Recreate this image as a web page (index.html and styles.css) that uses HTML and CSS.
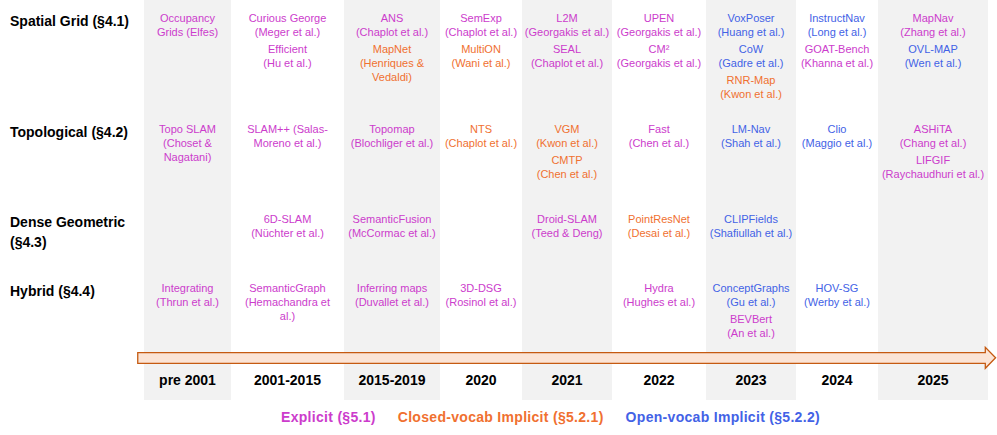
FILE: index.html
```html
<!DOCTYPE html>
<html lang="en">
<head>
<meta charset="utf-8">
<title>Timeline of spatial representations</title>
<link rel="stylesheet" href="styles.css">
</head>
<body>
<div class="chart">
  <div class="col labels">
    <div class="cell"><div class="label">Spatial Grid (§4.1)</div></div>
    <div class="cell"><div class="label">Topological (§4.2)</div></div>
    <div class="cell"><div class="label">Dense Geometric<br>(§4.3)</div></div>
    <div class="cell"><div class="label">Hybrid (§4.4)</div></div>
  </div>

  <div class="col shade w1">
    <div class="cell"><div class="e m">Occupancy<br>Grids (Elfes)</div></div>
    <div class="cell"><div class="e m">Topo SLAM<br>(Choset &amp;<br>Nagatani)</div></div>
    <div class="cell"></div>
    <div class="cell"><div class="e m">Integrating<br>(Thrun et al.)</div></div>
    <div class="year">pre 2001</div>
  </div>

  <div class="col w2">
    <div class="cell"><div class="e m">Curious George<br>(Meger et al.)</div><div class="e m">Efficient<br>(Hu et al.)</div></div>
    <div class="cell"><div class="e m">SLAM++ (Salas-<br>Moreno et al.)</div></div>
    <div class="cell"><div class="e m">6D-SLAM<br>(Nüchter et al.)</div></div>
    <div class="cell"><div class="e m">SemanticGraph<br>(Hemachandra et<br>al.)</div></div>
    <div class="year">2001-2015</div>
  </div>

  <div class="col shade w3">
    <div class="cell"><div class="e m">ANS<br>(Chaplot et al.)</div><div class="e o">MapNet<br>(Henriques &amp;<br>Vedaldi)</div></div>
    <div class="cell"><div class="e m">Topomap<br>(Blochliger et al.)</div></div>
    <div class="cell"><div class="e m">SemanticFusion<br>(McCormac et al.)</div></div>
    <div class="cell"><div class="e m">Inferring maps<br>(Duvallet et al.)</div></div>
    <div class="year">2015-2019</div>
  </div>

  <div class="col w4">
    <div class="cell"><div class="e m">SemExp<br>(Chaplot et al.)</div><div class="e o">MultiON<br>(Wani et al.)</div></div>
    <div class="cell"><div class="e o">NTS<br>(Chaplot et al.)</div></div>
    <div class="cell"></div>
    <div class="cell"><div class="e m">3D-DSG<br>(Rosinol et al.)</div></div>
    <div class="year">2020</div>
  </div>

  <div class="col shade w5">
    <div class="cell"><div class="e m">L2M<br>(Georgakis et al.)</div><div class="e m">SEAL<br>(Chaplot et al.)</div></div>
    <div class="cell"><div class="e o">VGM<br>(Kwon et al.)</div><div class="e o">CMTP<br>(Chen et al.)</div></div>
    <div class="cell"><div class="e m">Droid-SLAM<br>(Teed &amp; Deng)</div></div>
    <div class="cell"></div>
    <div class="year">2021</div>
  </div>

  <div class="col w6">
    <div class="cell"><div class="e m">UPEN<br>(Georgakis et al.)</div><div class="e m">CM²<br>(Georgakis et al.)</div></div>
    <div class="cell"><div class="e m">Fast<br>(Chen et al.)</div></div>
    <div class="cell"><div class="e o">PointResNet<br>(Desai et al.)</div></div>
    <div class="cell"><div class="e m">Hydra<br>(Hughes et al.)</div></div>
    <div class="year">2022</div>
  </div>

  <div class="col shade w7">
    <div class="cell"><div class="e b">VoxPoser<br>(Huang et al.)</div><div class="e b">CoW<br>(Gadre et al.)</div><div class="e o">RNR-Map<br>(Kwon et al.)</div></div>
    <div class="cell"><div class="e b">LM-Nav<br>(Shah et al.)</div></div>
    <div class="cell"><div class="e b">CLIPFields<br>(Shafiullah et al.)</div></div>
    <div class="cell"><div class="e b">ConceptGraphs<br>(Gu et al.)</div><div class="e m">BEVBert<br>(An et al.)</div></div>
    <div class="year">2023</div>
  </div>

  <div class="col w8">
    <div class="cell"><div class="e b">InstructNav<br>(Long et al.)</div><div class="e m">GOAT-Bench<br>(Khanna et al.)</div></div>
    <div class="cell"><div class="e b">Clio<br>(Maggio et al.)</div></div>
    <div class="cell"></div>
    <div class="cell"><div class="e b">HOV-SG<br>(Werby et al.)</div></div>
    <div class="year">2024</div>
  </div>

  <div class="col shade w9">
    <div class="cell"><div class="e m">MapNav<br>(Zhang et al.)</div><div class="e b">OVL-MAP<br>(Wen et al.)</div></div>
    <div class="cell"><div class="e m">ASHiTA<br>(Chang et al.)</div><div class="e m">LIFGIF<br>(Raychaudhuri et al.)</div></div>
    <div class="cell"></div>
    <div class="cell"></div>
    <div class="year">2025</div>
  </div>

  <svg class="arrow" width="861" height="26" viewBox="0 0 861 26" aria-hidden="true">
    <polygon points="0.75,8.7 848.3,8.7 848.3,3.3 858.6,13.8 848.3,24.3 848.3,19.3 0.75,19.3" fill="#fbe4d6" stroke="#c55a11" stroke-width="1.3" stroke-linejoin="miter"/>
  </svg>
</div>

<div class="legend">
  <span class="lg m">Explicit (§5.1)</span>
  <span class="lg o">Closed-vocab Implicit (§5.2.1)</span>
  <span class="lg b">Open-vocab Implicit (§5.2.2)</span>
</div>
</body>
</html>
```

FILE: styles.css
```css
html, body {
  margin: 0;
  padding: 0;
  background: #ffffff;
}

body {
  width: 997px;
  height: 435px;
  overflow: hidden;
  font-family: "Liberation Sans", Arial, sans-serif;
  color: #000;
}

.chart {
  position: relative;
  display: flex;
  height: 400px;
}

.col {
  display: grid;
  grid-template-rows: 111px 90px 69px 64px 23px 32px;
  padding-top: 11px;
  box-sizing: border-box;
  height: 400px;
  text-align: center;
}

.shade {
  background: #f2f2f2;
}

.labels {
  width: 144px;
  padding-left: 10px;
  text-align: left;
}

.w1 { width: 87px; }
.w2 { width: 113px; }
.w3 { width: 96px; }
.w4 { width: 82px; }
.w5 { width: 90px; }
.w6 { width: 94px; }
.w7 { width: 90px; }
.w8 { width: 82px; }
.w9 { width: 110px; }

.cell {
  display: flex;
  flex-direction: column;
  gap: 3px;
  align-items: center;
}

.labels .cell {
  align-items: flex-start;
}

.label {
  font-size: 14px;
  font-weight: bold;
  line-height: 20px;
  white-space: nowrap;
}

.e {
  font-size: 11px;
  line-height: 14px;
  white-space: nowrap;
}

.m { color: #cc3ccc; }
.o { color: #f07030; }
.b { color: #4362e6; }

.year {
  grid-row: 6;
  font-size: 14px;
  font-weight: bold;
  line-height: 16px;
  padding-top: 4px;
}

.arrow {
  position: absolute;
  left: 137px;
  top: 344px;
  display: block;
}

.legend {
  display: flex;
  gap: 22px;
  padding-left: 281px;
  padding-top: 9px;
}

.lg {
  font-size: 14px;
  font-weight: bold;
  line-height: 17px;
  letter-spacing: 0.3px;
  white-space: nowrap;
}
```
